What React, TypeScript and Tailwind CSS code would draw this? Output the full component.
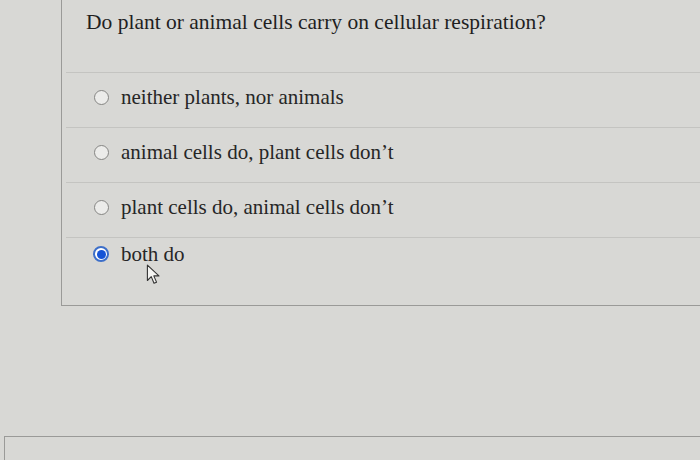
const options = [
  { label: 'neither plants, nor animals', checked: false },
  { label: 'animal cells do, plant cells don’t', checked: false },
  { label: 'plant cells do, animal cells don’t', checked: false },
  { label: 'both do', checked: true },
];

function Radio({ checked }: { checked: boolean }) {
  if (checked) {
    return (
      <span className="w-[16px] h-[16px] rounded-full border-2 border-[#3d6fc9] bg-white flex items-center justify-center shrink-0">
        <span className="block w-[9px] h-[9px] rounded-full bg-[#1554d6]" />
      </span>
    );
  }
  return <span className="block w-[15px] h-[15px] rounded-full border border-[#858583] bg-[#ececea] shrink-0" />;
}

function Cursor() {
  return (
    <svg width="16" height="22" viewBox="0 0 14 20" className="absolute left-[25px] top-[24px]">
      <path d="M1 1 L1 15 L4.5 11.5 L7 17.5 L9.3 16.5 L6.8 10.8 L11.5 10.8 Z" fill="#f4f4f2" stroke="#333" strokeWidth="1" strokeLinejoin="round" />
    </svg>
  );
}

export default function App() {
  return (
    <div className="w-[700px] h-[460px] overflow-hidden bg-[#d8d8d5] font-['Liberation_Serif',serif] text-[#262626]">
      {/* Question panel */}
      <div className="ml-[61px] h-[306px] border-l border-b border-[#9a9a98]">
        <h2 className="pl-[24px] pt-[8px] h-[72px] text-[21.5px] leading-[28px] text-[#1f1f1f] whitespace-nowrap">
          Do plant or animal cells carry on cellular respiration?
        </h2>
        <div className="ml-[4px]">
          {options.map((opt, i) => (
            <div
              key={opt.label}
              className={
                i < 3
                  ? 'h-[55px] border-t border-[#c4c4c1] flex items-center pl-[28px] gap-[12px] pb-[6px]'
                  : 'border-t border-[#c4c4c1] flex items-start pl-[27px] gap-[12px] pt-[2px]'
              }
            >
              <span className={i < 3 ? 'block' : 'block mt-[6px]'}>
                <Radio checked={opt.checked} />
              </span>
              <span className="text-[21px] leading-[28px] relative whitespace-nowrap">
                {opt.label}
                {opt.checked && <Cursor />}
              </span>
            </div>
          ))}
        </div>
      </div>

      {/* Next panel */}
      <div className="mt-[130px] ml-[4px] h-[40px] border-l border-t border-[#9a9a98]" />
    </div>
  );
}
